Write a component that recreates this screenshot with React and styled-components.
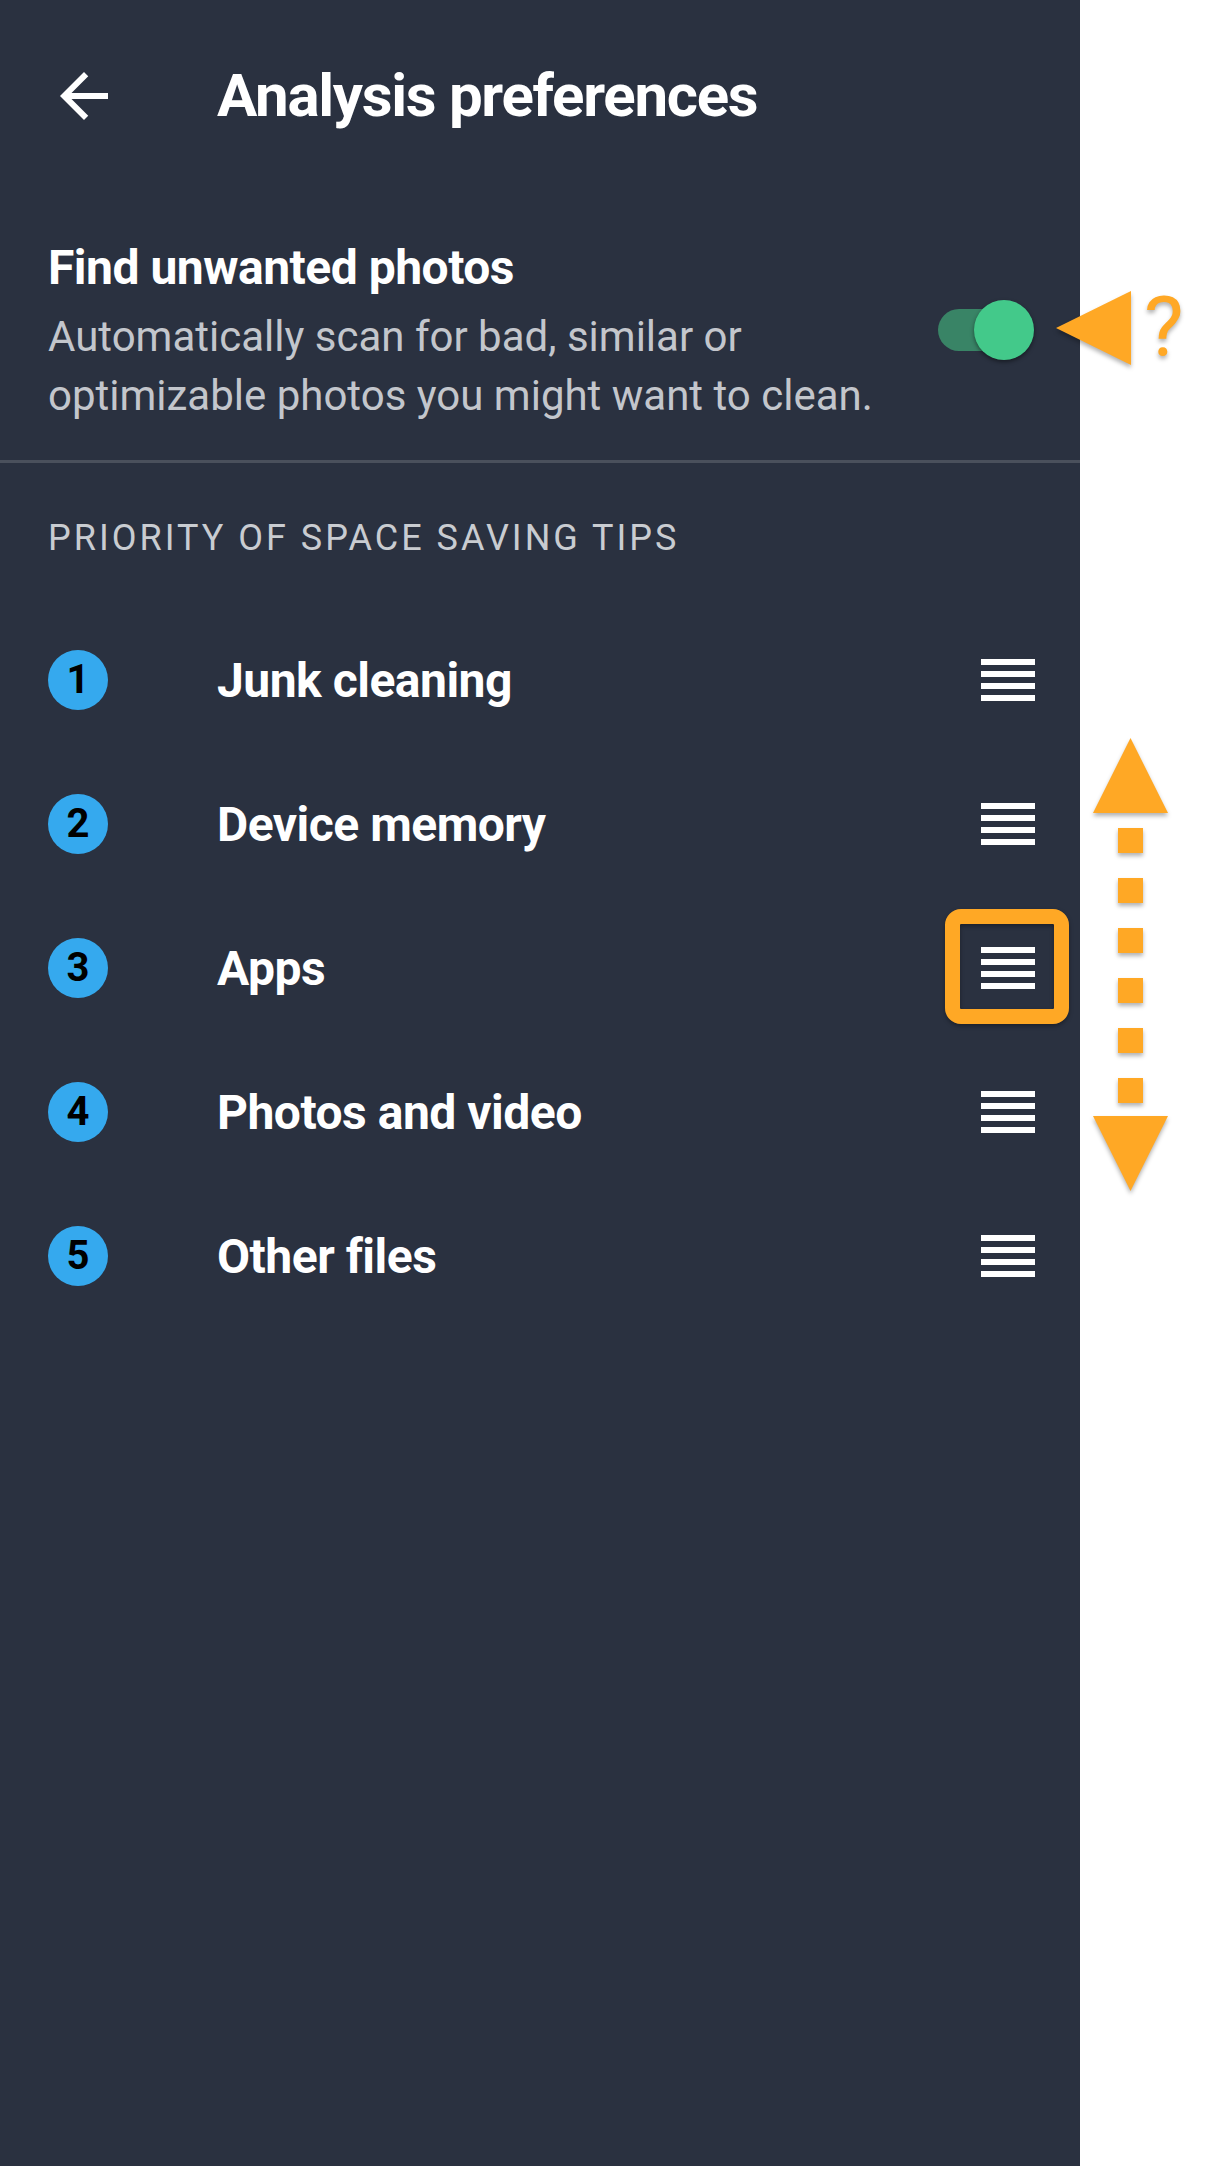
import React from "react";
import styled, { createGlobalStyle } from "styled-components";

const GlobalStyle = createGlobalStyle`
  body {
    margin: 0;
    background: #ffffff;
    font-family: Roboto, "Noto Sans", "Liberation Sans", sans-serif;
  }
`;

const tips = ["Junk cleaning", "Device memory", "Apps", "Photos and video", "Other files"];

function App() {
  return (
    <>
      <GlobalStyle />
      <Page>
        <Panel>
          <Toolbar>
            <BackButton>
              <svg width="72" height="72" viewBox="0 0 24 24">
                <path fill="#ffffff" d="M20 11H7.83l5.59-5.59L12 4l-8 8 8 8 1.41-1.41L7.83 13H20v-2z" />
              </svg>
            </BackButton>
            <Title>Analysis preferences</Title>
          </Toolbar>

          <PrefRow>
            <PrefText>
              <PrefTitle>Find unwanted photos</PrefTitle>
              <PrefSummary>
                Automatically scan for bad, similar or optimizable photos you might want to clean.
              </PrefSummary>
            </PrefText>
            <Switch>
              <Track />
              <Thumb />
            </Switch>
          </PrefRow>
          <Divider />

          <SectionHeader>PRIORITY OF SPACE SAVING TIPS</SectionHeader>
          <TipList>
            {tips.map((tip, i) => (
              <TipRow key={tip}>
                <Badge>{i + 1}</Badge>
                <TipLabel>{tip}</TipLabel>
                <Handle $highlighted={i === 2}>
                  <HandleLine />
                  <HandleLine />
                  <HandleLine />
                  <HandleLine />
                </Handle>
              </TipRow>
            ))}
          </TipList>
        </Panel>
        <Gutter />

        <SwitchPointer>
          <svg width="75" height="74" viewBox="0 0 75 74">
            <polygon points="0,37 75,0 75,74" fill="#ffa825" />
          </svg>
          <Question>?</Question>
        </SwitchPointer>

        <DragHint>
          <svg width="75" height="75" viewBox="0 0 75 75">
            <polygon points="37.5,0 75,75 0,75" fill="#ffa825" />
          </svg>
          <Dots>
            {[0, 1, 2, 3, 4, 5].map((d) => (
              <Dot key={d} />
            ))}
          </Dots>
          <svg width="75" height="75" viewBox="0 0 75 75">
            <polygon points="0,0 75,0 37.5,75" fill="#ffa825" />
          </svg>
        </DragHint>
      </Page>
    </>
  );
}

export default App;

const Page = styled.div`
  position: relative;
  display: flex;
  width: 1210px;
  min-height: 2166px;
`;

const Panel = styled.div`
  width: 1080px;
  min-height: 2166px;
  background: #2a3140;
  color: #ffffff;
`;

const Gutter = styled.div`
  flex: 1;
  background: #ffffff;
`;

const Toolbar = styled.div`
  display: flex;
  align-items: center;
  height: 192px;
  padding-left: 48px;
`;

const BackButton = styled.div`
  display: flex;
  width: 72px;
  height: 72px;
`;

const Title = styled.h1`
  margin: 0 0 0 97px;
  font-size: 60px;
  font-weight: 700;
  letter-spacing: -1.3px;
  line-height: 72px;
  color: #ffffff;
`;

const PrefRow = styled.div`
  display: flex;
  align-items: center;
  padding: 48px 46px 35px 48px;
`;

const PrefText = styled.div`
  width: 860px;
`;

const PrefTitle = styled.div`
  font-size: 48px;
  font-weight: 700;
  letter-spacing: -0.5px;
  line-height: 56px;
`;

const PrefSummary = styled.div`
  margin-top: 11px;
  font-size: 42px;
  line-height: 59px;
  color: #c3c6cc;
`;

const Switch = styled.div`
  position: relative;
  margin-left: auto;
  margin-bottom: 6px;
  width: 96px;
  height: 60px;
`;

const Track = styled.div`
  position: absolute;
  left: 0;
  top: 9px;
  width: 86px;
  height: 42px;
  border-radius: 21px;
  background: #398466;
`;

const Thumb = styled.div`
  position: absolute;
  right: 0;
  top: 0;
  width: 60px;
  height: 60px;
  border-radius: 50%;
  background: #43c98a;
  box-shadow: 0 2px 4px rgba(0, 0, 0, 0.45);
`;

const Divider = styled.div`
  height: 3px;
  background: #4a505c;
`;

const SectionHeader = styled.div`
  padding: 51px 48px 0;
  font-size: 36px;
  line-height: 48px;
  letter-spacing: 3px;
  color: #c9ccd1;
`;

const TipList = styled.div`
  margin-top: 46px;
`;

const TipRow = styled.div`
  display: flex;
  align-items: center;
  height: 144px;
  padding: 0 45px 0 48px;
`;

const Badge = styled.div`
  width: 60px;
  height: 60px;
  border-radius: 50%;
  background: #35a9ee;
  color: #000000;
  font-size: 40px;
  font-weight: 700;
  line-height: 60px;
  text-align: center;
`;

const TipLabel = styled.div`
  margin-left: 109px;
  font-size: 48px;
  font-weight: 700;
  letter-spacing: -0.5px;
  color: #ffffff;
`;

const Handle = styled.div`
  position: relative;
  margin-left: auto;
  display: flex;
  flex-direction: column;
  justify-content: space-between;
  width: 54px;
  height: 42px;

  &::before {
    content: "";
    display: ${(p) => (p.$highlighted ? "block" : "none")};
    position: absolute;
    top: -38px;
    left: -36px;
    right: -34px;
    bottom: -35px;
    border: 15px solid #ffa825;
    border-radius: 16px;
    box-shadow: 0 2px 4px rgba(0, 0, 0, 0.35), inset 0 2px 4px rgba(0, 0, 0, 0.35);
  }
`;

const HandleLine = styled.div`
  height: 6px;
  background: #ffffff;
`;

const SwitchPointer = styled.div`
  position: absolute;
  top: 291px;
  left: 1056px;
  display: flex;
  align-items: flex-start;
  filter: drop-shadow(0 3px 2px rgba(0, 0, 0, 0.3));
`;

const Question = styled.span`
  margin-left: 13px;
  font-size: 84px;
  line-height: 74px;
  color: #ffa825;
`;

const DragHint = styled.div`
  position: absolute;
  top: 738px;
  left: 1093px;
  width: 75px;
  display: flex;
  flex-direction: column;
  align-items: center;
  filter: drop-shadow(0 3px 2px rgba(0, 0, 0, 0.3));

  svg {
    display: block;
  }
`;

const Dots = styled.div`
  display: flex;
  flex-direction: column;
  gap: 25px;
  padding: 15px 0 13px;
`;

const Dot = styled.div`
  width: 25px;
  height: 25px;
  background: #ffa825;
`;
